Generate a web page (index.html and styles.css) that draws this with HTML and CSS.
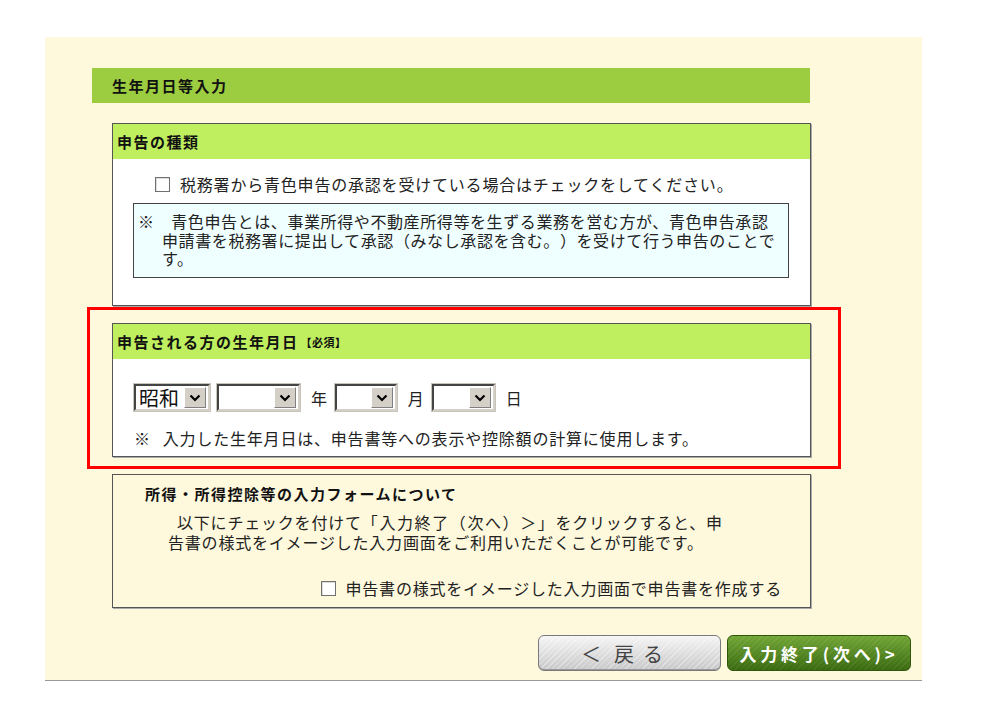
FILE: index.html
```html
<!DOCTYPE html>
<html lang="ja">
<head>
  <meta charset="UTF-8">
  <meta name="viewport" content="width=device-width, initial-scale=1.0">
  <title>生年月日等入力</title>
  <link rel="stylesheet" href="styles.css">
</head>
<body>
  <div class="page">
    <div class="title-bar">生年月日等入力</div>

    <div class="sections">
      <!-- 申告の種類 -->
      <div class="box kind">
        <div class="box-head">申告の種類</div>
        <div class="box-body">
          <label class="check-row">
            <input type="checkbox" class="check">
            <span>税務署から青色申告の承認を受けている場合はチェックをしてください。</span>
          </label>
          <div class="info">※　青色申告とは、事業所得や不動産所得等を生ずる業務を営む方が、青色申告承認<br>申請書を税務署に提出して承認（みなし承認を含む。）を受けて行う申告のことで<br>す。</div>
        </div>
      </div>

      <!-- 生年月日 -->
      <div class="highlight">
        <div class="box birth">
          <div class="box-head">申告される方の生年月日<span class="required">【必須】</span></div>
          <div class="box-body">
            <div class="date-row">
              <span class="select w-era">
                <span class="value">昭和</span>
                <span class="arrow"><svg width="12" height="8" viewBox="0 0 12 8"><polyline points="1.5,1.5 6,6 10.5,1.5" fill="none" stroke="#000" stroke-width="2.2"/></svg></span>
              </span>
              <span class="select w-year">
                <span class="value"></span>
                <span class="arrow"><svg width="12" height="8" viewBox="0 0 12 8"><polyline points="1.5,1.5 6,6 10.5,1.5" fill="none" stroke="#000" stroke-width="2.2"/></svg></span>
              </span>
              <span class="unit">年</span>
              <span class="select w-month">
                <span class="value"></span>
                <span class="arrow"><svg width="12" height="8" viewBox="0 0 12 8"><polyline points="1.5,1.5 6,6 10.5,1.5" fill="none" stroke="#000" stroke-width="2.2"/></svg></span>
              </span>
              <span class="unit">月</span>
              <span class="select w-day">
                <span class="value"></span>
                <span class="arrow"><svg width="12" height="8" viewBox="0 0 12 8"><polyline points="1.5,1.5 6,6 10.5,1.5" fill="none" stroke="#000" stroke-width="2.2"/></svg></span>
              </span>
              <span class="unit">日</span>
            </div>
            <div class="note"><span class="mark">※</span>入力した生年月日は、申告書等への表示や控除額の計算に使用します。</div>
          </div>
        </div>
      </div>

      <!-- 入力フォームについて -->
      <div class="box form-note">
        <div class="form-title">所得・所得控除等の入力フォームについて</div>
        <p class="form-text">以下にチェックを付けて<span class="quote">「入力終了（次へ）＞」</span>をクリックすると、申<br>告書の様式をイメージした入力画面をご利用いただくことが可能です。</p>
        <label class="check-row right">
          <input type="checkbox" class="check">
          <span>申告書の様式をイメージした入力画面で申告書を作成する</span>
        </label>
      </div>
    </div>

    <div class="actions">
      <button class="btn btn-back"><span class="lt">＜</span>戻る</button>
      <button class="btn btn-next">入力終了(次へ)&gt;</button>
    </div>
  </div>
</body>
</html>
```

FILE: styles.css
```css
body {
  margin: 0;
  background: #fff;
  color: #222;
  font-family: "Noto Sans CJK JP", "Noto Sans", sans-serif;
  font-size: 16px;
  letter-spacing: 0.8px;
  text-spacing-trim: space-all;
}
.page {
  margin: 37px 0 0 45px;
  width: 877px;
  height: 644px;
  box-sizing: border-box;
  padding: 31px 11px 0 47px;
  background: #fef8dc;
  border-bottom: 1px solid #999;
}
.title-bar {
  width: 718px;
  height: 35px;
  box-sizing: border-box;
  padding-left: 20px;
  display: flex;
  align-items: center;
  background: #9ccc3f;
  color: #111;
  font-size: 15px;
  font-weight: bold;
  letter-spacing: 1.5px;
}
.sections {
  margin: 20px 0 0 20px;
  width: 699px;
}
.box {
  border: 1px solid #555;
  box-shadow: 1px 1px 0 #aaa;
  background: #fff;
}
.box-head {
  height: 35px;
  padding-left: 4px;
  display: flex;
  align-items: center;
  background: #bfee5f;
  color: #111;
  font-size: 15px;
  font-weight: bold;
  letter-spacing: 1.5px;
}
.required {
  font-size: 11px;
  letter-spacing: 0.5px;
  margin-left: 2px;
}
.kind .box-body {
  padding: 15px 21px 27px 20px;
}
.check-row {
  display: flex;
  align-items: center;
  height: 20px;
  padding-left: 22px;
  line-height: 20px;
}
.check-row.right {
  justify-content: flex-end;
  padding-left: 0;
}
.check {
  appearance: none;
  -webkit-appearance: none;
  width: 15px;
  height: 15px;
  margin: 0 10px 0 0;
  box-sizing: border-box;
  border: 1px solid #707070;
  background: #fff;
  box-shadow: inset 1px 1px 0 #ddd;
}
.info {
  margin-top: 9px;
  height: 75px;
  box-sizing: border-box;
  padding: 8px 4px 0 28px;
  background: #effeff;
  border: 1px solid #444;
  line-height: 18.5px;
  letter-spacing: 0.6px;
  text-indent: -24px;
}
.highlight {
  margin: 1px 0 0 -25px;
  width: 754px;
  box-sizing: border-box;
  padding: 13px 27px 9px 22px;
  border: 3px solid #f00;
}
.birth .box-body {
  padding: 25px 0 8px 21px;
}
.date-row {
  display: flex;
  align-items: center;
  height: 27px;
}
.select {
  height: 27px;
  box-sizing: border-box;
  display: inline-flex;
  align-items: center;
  justify-content: space-between;
  padding-right: 2px;
  background: #fff;
  border-top: 2px solid #444;
  border-left: 2px solid #444;
  border-right: 2px solid #d4d0c8;
  border-bottom: 2px solid #d4d0c8;
  outline: 1px solid #c8c4bc;
}
.select .value {
  padding-left: 3px;
  font-size: 20px;
  line-height: 1;
  letter-spacing: 0;
  color: #111;
}
.select .arrow {
  width: 22px;
  height: 21px;
  box-sizing: border-box;
  display: flex;
  align-items: center;
  justify-content: center;
  background: #d4d0c8;
  border: 1px solid;
  border-color: #fff #808080 #808080 #fff;
}
.w-era { width: 76px; }
.w-year { width: 83px; margin-left: 7px; }
.w-month { width: 62px; }
.w-day { width: 63px; }
.unit {
  margin: 0 7px 0 11px;
}
.note {
  margin-top: 17px;
  line-height: 20px;
}
.mark {
  margin-right: 12px;
}
.form-note {
  margin-top: 5px;
  background: transparent;
  padding: 9px 28px 9px 32px;
}
.form-title {
  line-height: 20px;
  font-size: 15px;
  font-weight: bold;
  letter-spacing: 1.5px;
  color: #111;
}
.form-text {
  margin: 8px 0 0;
  padding-left: 23px;
  line-height: 20px;
  text-indent: 9px;
}
.form-text .quote {
  letter-spacing: 1.6px;
}
.form-note .check-row {
  margin-top: 26px;
}
.actions {
  display: flex;
  justify-content: flex-end;
  gap: 6px;
  margin-top: 27px;
}
.btn {
  height: 36px;
  box-sizing: border-box;
  border-radius: 6px;
  display: flex;
  align-items: center;
  justify-content: center;
  padding: 0;
  font-family: "Noto Sans CJK JP", "Noto Sans", sans-serif;
}
.btn-back {
  width: 183px;
  border: 1px solid #7a7a7a;
  background:
    repeating-linear-gradient(135deg, rgba(255, 255, 255, 0.35) 0 1px, transparent 1px 4px),
    linear-gradient(#f5f5f5, #c8c8c8);
  box-shadow: inset 0 -1px 0 #999;
  color: #444;
  font-size: 20px;
  letter-spacing: 9px;
  padding-right: 6px;
}
.btn-back .lt {
  margin-right: 4px;
}
.btn-next {
  width: 184px;
  border: 1px solid #2f570a;
  background:
    repeating-linear-gradient(135deg, rgba(255, 255, 255, 0.07) 0 1px, transparent 1px 4px),
    linear-gradient(#72a636, #3a6a10);
  color: #fff;
  font-size: 17px;
  font-weight: bold;
  letter-spacing: 3.8px;
}
```
